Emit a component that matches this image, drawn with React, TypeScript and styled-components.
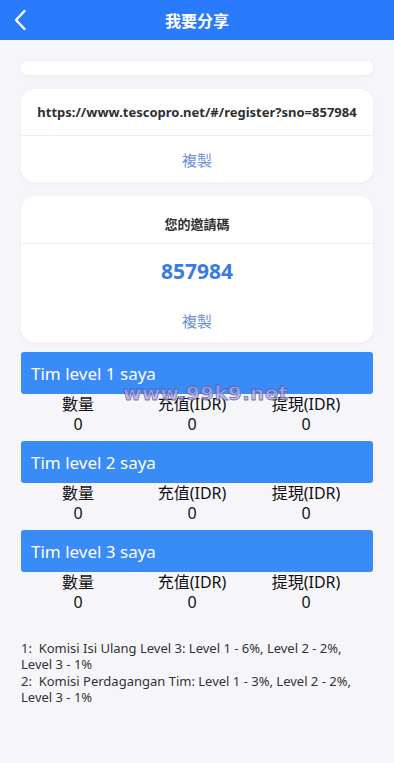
import React from "react";
import styled, { createGlobalStyle } from "styled-components";

const Global = createGlobalStyle`
  html, body { margin: 0; padding: 0; background: #f6f6fa; }
  body { font-family: "Noto Sans", "Noto Sans CJK SC", sans-serif; }
  * { box-sizing: border-box; }
`;

const Page = styled.div`
  position: relative;
  min-height: 763px;
  background: #f6f6fa;
`;

const Header = styled.header`
  height: 40px;
  background: #2a7bfc;
  display: flex;
  align-items: center;
  justify-content: center;
  position: relative;
`;

const Back = styled.button`
  position: absolute;
  left: 8px;
  top: 6px;
  width: 24px;
  height: 28px;
  border: 0;
  background: none;
  padding: 0;
  display: flex;
  align-items: center;
  justify-content: center;
`;

const Title = styled.h1`
  margin: 0;
  color: #fff;
  font-size: 16px;
  font-weight: 700;
  font-family: "Noto Sans CJK SC", sans-serif;
`;

const Content = styled.main`
  padding: 21px 21px 40px;
  display: flex;
  flex-direction: column;
`;

const Card = styled.section<{ $mt?: number }>`
  background: #fff;
  border-radius: 14px;
  box-shadow: 0 1px 6px rgba(0, 0, 0, 0.04);
  margin-top: ${(p) => p.$mt ?? 0}px;
  display: flex;
  flex-direction: column;
  overflow: hidden;
`;

const Strip = styled.div`
  height: 14px;
  background: #fff;
  border-radius: 7px;
  box-shadow: 0 1px 6px rgba(0, 0, 0, 0.04);
`;

const CardTop = styled.div<{ $h: number; $size: number; $pt?: number }>`
  height: ${(p) => p.$h}px;
  padding-top: ${(p) => p.$pt ?? 0}px;
  display: flex;
  align-items: center;
  justify-content: center;
  border-bottom: 1px solid #eeeef2;
  color: #303030;
  font-size: ${(p) => p.$size}px;
  font-weight: 700;
  font-family: "Noto Sans", "Noto Sans CJK TC", sans-serif;
`;

const CodeRow = styled.div`
  height: 54px;
  display: flex;
  align-items: center;
  justify-content: center;
  color: #3a7be3;
  font-size: 21px;
  font-weight: 700;
  font-family: "Noto Sans", sans-serif;
`;

const Copy = styled.div<{ $h: number }>`
  height: ${(p) => p.$h}px;
  display: flex;
  align-items: center;
  justify-content: center;
  color: #6d8fd8;
  font-size: 15px;
  font-family: "Noto Sans CJK TC", sans-serif;
`;

const LevelHead = styled.div<{ $mt: number }>`
  margin-top: ${(p) => p.$mt}px;
  height: 42px;
  border-radius: 3px;
  background: #398bf6;
  color: #fff;
  display: flex;
  align-items: center;
  padding-left: 10px;
  font-size: 17px;
  font-family: "Noto Sans", "Noto Sans CJK TC", sans-serif;
`;

const Stats = styled.div`
  display: grid;
  grid-template-columns: repeat(3, 114px);
  padding-bottom: 7px;
`;

const Stat = styled.div`
  display: flex;
  flex-direction: column;
  align-items: center;
  color: #111;
  font-size: 16px;
  line-height: 20px;
  font-family: "Noto Sans", "Noto Sans CJK TC", sans-serif;
`;

const Notes = styled.div`
  margin-top: 21px;
  color: #333;
  font-size: 13px;
  line-height: 16.4px;
  font-family: "Noto Sans", sans-serif;
`;

const Watermark = styled.div`
  position: absolute;
  left: 123px;
  top: 381px;
  font-family: "DejaVu Sans", sans-serif;
  font-weight: 700;
  font-size: 20px;
  letter-spacing: 0.3px;
  color: rgba(170, 170, 225, 0.75);
  -webkit-text-stroke: 0.8px rgba(90, 80, 150, 0.75);
  pointer-events: none;
`;

const levels = [1, 2, 3];

export default function App() {
  return (
    <Page>
      <Global />
      <Header>
        <Back aria-label="back">
          <svg width="14" height="22" viewBox="0 0 14 22">
            <path d="M11.5 2 L3 11 L11.5 20" fill="none" stroke="#fff" strokeWidth="2.4" strokeLinecap="round" strokeLinejoin="round" />
          </svg>
        </Back>
        <Title>我要分享</Title>
      </Header>
      <Content>
        <Strip />
        <Card $mt={14}>
          <CardTop $h={47} $size={13}>https://www.tescopro.net/#/register?sno=857984</CardTop>
          <Copy $h={46}>複製</Copy>
        </Card>
        <Card $mt={14}>
          <CardTop $h={48} $size={13} $pt={7}>您的邀請碼</CardTop>
          <CodeRow>857984</CodeRow>
          <Copy $h={44}>複製</Copy>
        </Card>
        {levels.map((l, i) => (
          <React.Fragment key={l}>
            <LevelHead $mt={i === 0 ? 10 : 0}>Tim level {l} saya</LevelHead>
            <Stats>
              <Stat><span>數量</span><span>0</span></Stat>
              <Stat><span>充值(IDR)</span><span>0</span></Stat>
              <Stat><span>提現(IDR)</span><span>0</span></Stat>
            </Stats>
          </React.Fragment>
        ))}
        <Notes>
          1:&nbsp; Komisi Isi Ulang Level 3: Level 1 - 6%, Level 2 - 2%, Level 3 - 1%
          <br />
          2:&nbsp; Komisi Perdagangan Tim: Level 1 - 3%, Level 2 - 2%, Level 3 - 1%
        </Notes>
      </Content>
      <Watermark>www.99k9.net</Watermark>
    </Page>
  );
}
